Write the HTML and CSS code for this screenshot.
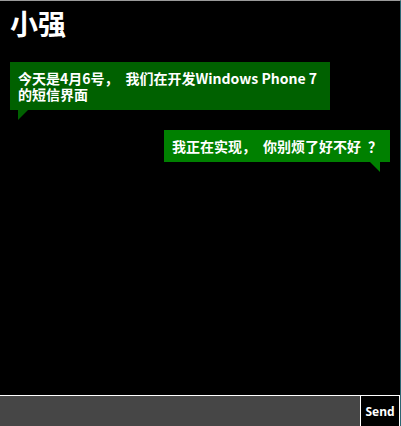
FILE: index.html
```html
<!DOCTYPE html>
<html lang="zh-CN">
<head>
<meta charset="utf-8">
<title>小强</title>
<link rel="stylesheet" href="styles.css">
</head>
<body>
<div class="app">
  <header class="header"><h1 class="title">小强</h1></header>
  <main class="messages">
    <div class="bubble bubble-in">今天是4月6号<span class="comma">，</span>我们在开发Windows Phone 7的短信界面</div>
    <div class="bubble bubble-out">我正在实现<span class="comma">，</span>你别烦了好不好<span class="question">？</span></div>
  </main>
  <footer class="composer">
    <div class="input"></div>
    <button class="send">Send</button>
  </footer>
</div>
</body>
</html>
```
FILE: styles.css
```css
html, body {
  margin: 0;
  padding: 0;
  background: #000;
}
.app {
  box-sizing: border-box;
  width: 401px;
  height: 426px;
  border-top: 1px solid #9a9a9a;
  border-right: 1px solid #2d6673;
  background: #000;
  color: #fff;
  display: flex;
  flex-direction: column;
  font-family: "Noto Sans CJK SC", "Noto Sans", sans-serif;
  overflow: hidden;
}
.header {
  padding: 8px 0 0 10px;
}
.title {
  margin: 0;
  font-size: 28px;
  line-height: 28px;
  font-weight: 700;
}
.messages {
  flex: 1;
  display: flex;
  flex-direction: column;
  padding-top: 25px;
  gap: 20px;
}
.bubble {
  position: relative;
  box-sizing: border-box;
  padding: 8px 8px;
  font-size: 14px;
  line-height: 16px;
  font-weight: 700;
}
.comma {
  margin-right: 7px;
}
.question {
  margin-left: 7px;
}
.bubble::after {
  content: "";
  position: absolute;
  bottom: -10px;
  width: 0;
  height: 0;
  border-top: 10px solid;
}
.bubble-in {
  align-self: flex-start;
  margin-left: 10px;
  width: 320px;
  background: #006100;
}
.bubble-in::after {
  left: 8px;
  border-top-color: #006100;
  border-right: 10px solid transparent;
}
.bubble-out {
  align-self: flex-end;
  margin-right: 10px;
  background: #008000;
}
.bubble-out::after {
  right: 10px;
  border-top-color: #008000;
  border-left: 10px solid transparent;
}
.composer {
  display: flex;
  height: 30px;
  border-top: 1px solid #fff;
}
.input {
  flex: 1;
  background: #464646;
}
.send {
  box-sizing: border-box;
  width: 40px;
  margin: 0;
  padding: 0;
  background: #000;
  color: #fff;
  border: none;
  border-left: 1px solid #fff;
  border-right: 1px solid #fff;
  font-family: "Noto Sans", sans-serif;
  font-size: 12px;
  font-weight: 700;
}
```
